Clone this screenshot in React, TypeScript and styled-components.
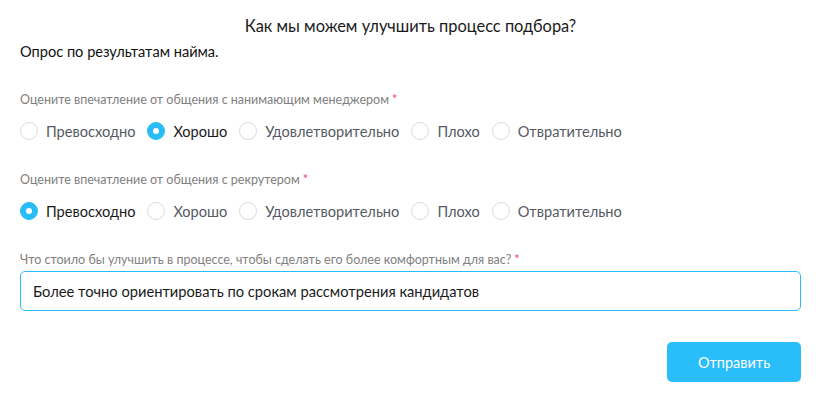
import styled, { createGlobalStyle } from "styled-components";

const GlobalStyle = createGlobalStyle`
  body {
    margin: 0;
    background: #fff;
    font-family: Lato, "Noto Sans", sans-serif;
    color: #1a1a1a;
  }
`;

const Page = styled.div`
  padding: 0 20px;
  display: flex;
  flex-direction: column;
`;

const Title = styled.h2`
  margin: 15px 0 0;
  font-size: 16.4px;
  font-weight: 400;
  text-align: center;
  line-height: 22px;
`;

const Subtitle = styled.p`
  margin: 5px 0 0;
  font-size: 14.6px;
  line-height: 20px;
  color: #111;
`;

const Question = styled.div<{ gap?: number }>`
  margin-top: ${(p) => p.gap ?? 30}px;
  display: flex;
  flex-direction: column;
`;

const Label = styled.label`
  font-size: 12.5px;
  line-height: 16px;
  color: #808080;
`;

const Star = styled.span`
  color: #f5475d;
  margin-left: 3px;
`;

const RadioRow = styled.div`
  display: flex;
  align-items: center;
  margin-top: 12px;
  height: 22px;
`;

const Option = styled.div`
  display: flex;
  align-items: center;
  margin-right: 12px;
`;

const Circle = styled.span<{ checked: boolean }>`
  width: 18px;
  height: 18px;
  box-sizing: border-box;
  border-radius: 50%;
  border: 1px solid ${(p) => (p.checked ? "#29bdf7" : "#dcdcdc")};
  background: ${(p) => (p.checked ? "#29bdf7" : "#fff")};
  display: flex;
  align-items: center;
  justify-content: center;
  margin-right: 8px;
  &::after {
    content: "";
    display: ${(p) => (p.checked ? "block" : "none")};
    width: 6px;
    height: 6px;
    border-radius: 50%;
    background: #fff;
  }
`;

const OptionText = styled.span<{ checked: boolean }>`
  font-size: 14.6px;
  color: ${(p) => (p.checked ? "#1a1a1a" : "#555a64")};
`;

const TextInput = styled.input`
  margin-top: 3px;
  height: 40px;
  box-sizing: border-box;
  width: 100%;
  border: 1px solid #29bdf7;
  border-radius: 5px;
  padding: 0 12px;
  font-family: Lato, "Noto Sans", sans-serif;
  font-size: 14.7px;
  color: #1a1a1a;
  outline: none;
`;

const Footer = styled.div`
  display: flex;
  justify-content: flex-end;
  margin-top: 31px;
`;

const SubmitButton = styled.button`
  width: 134px;
  height: 40px;
  border: none;
  border-radius: 5px;
  background: #29bdf9;
  color: #fff;
  font-family: Lato, "Noto Sans", sans-serif;
  font-size: 14.5px;
`;

const OPTIONS = [
  "Превосходно",
  "Хорошо",
  "Удовлетворительно",
  "Плохо",
  "Отвратительно",
];

function RadioGroup({ value }: { value: number }) {
  return (
    <RadioRow>
      {OPTIONS.map((o, i) => (
        <Option key={o}>
          <Circle checked={i === value} />
          <OptionText checked={i === value}>{o}</OptionText>
        </Option>
      ))}
    </RadioRow>
  );
}

export default function App() {
  return (
    <>
      <GlobalStyle />
      <Page>
        <Title>Как мы можем улучшить процесс подбора?</Title>
        <Subtitle>Опрос по результатам найма.</Subtitle>

        <Question gap={30}>
          <Label>
            Оцените впечатление от общения с нанимающим менеджером
            <Star>*</Star>
          </Label>
          <RadioGroup value={1} />
        </Question>

        <Question>
          <Label>
            Оцените впечатление от общения с рекрутером<Star>*</Star>
          </Label>
          <RadioGroup value={0} />
        </Question>

        <Question>
          <Label>
            Что стоило бы улучшить в процессе, чтобы сделать его более
            комфортным для вас?<Star>*</Star>
          </Label>
          <TextInput
            readOnly
            value="Более точно ориентировать по срокам рассмотрения кандидатов"
          />
        </Question>

        <Footer>
          <SubmitButton>Отправить</SubmitButton>
        </Footer>
      </Page>
    </>
  );
}
